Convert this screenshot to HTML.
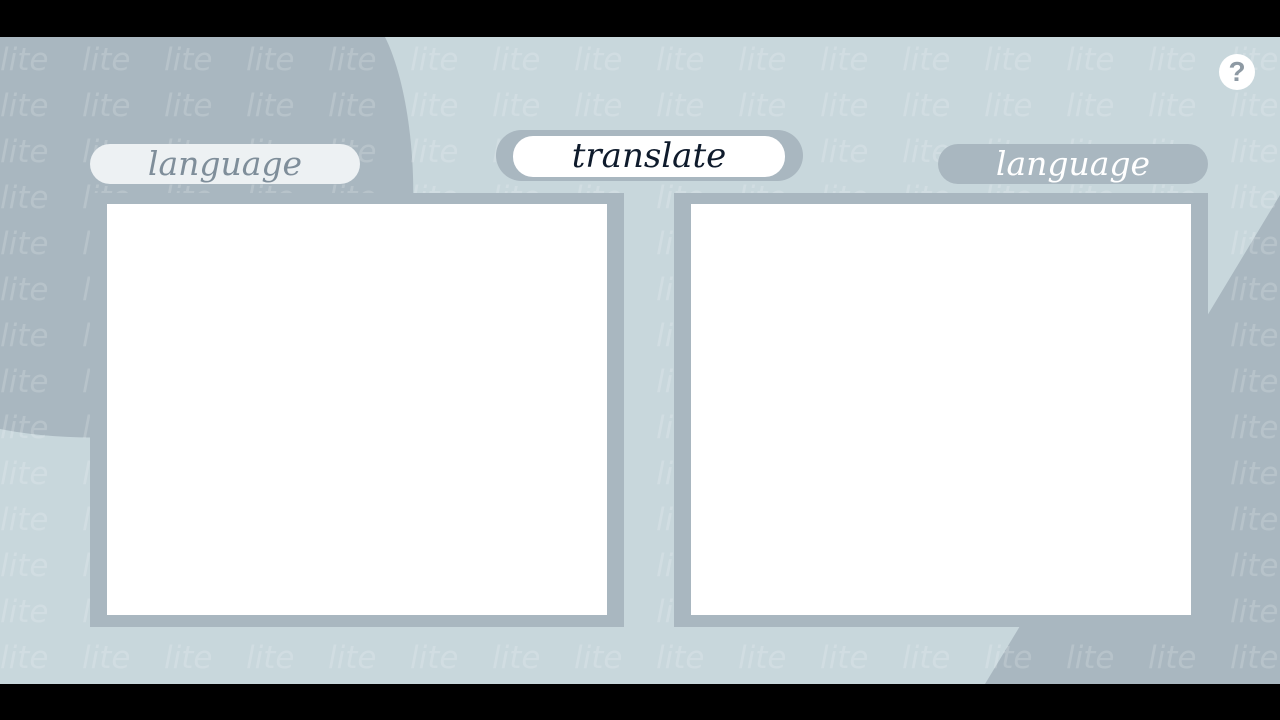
<!DOCTYPE html>
<html><head><meta charset="utf-8"><style>
html,body{margin:0;padding:0;width:1280px;height:720px;background:#000;overflow:hidden}
.stage{position:absolute;left:0;top:37px;width:1280px;height:647px;background:#c8d7dc;overflow:hidden}
.pat{position:absolute;left:0;top:0;width:1400px;font:italic 31px "DejaVu Sans","Liberation Sans",sans-serif;color:rgba(255,255,255,0.17);line-height:46px;white-space:nowrap}
.pat span{display:inline-block;width:82px}
.box{position:absolute;top:156px;width:534px;height:434px;background:#a9b7c0}
.box i{position:absolute;left:17px;top:11px;width:500px;height:411px;background:#fff}
.pill{position:absolute;border-radius:20px;text-align:center;font:italic 33px "DejaVu Serif","Liberation Serif",serif;line-height:40px}
</style></head><body>
<div class="stage">
<svg width="1280" height="647" style="position:absolute;left:0;top:0">
<path d="M0 0 L385 0 C405 40 415 110 413 170 C405 290 300 390 120 400 C70 402 30 398 0 392 Z" fill="#a9b7c0"/>
<polygon points="1280,158 985,647 1280,647" fill="#a9b7c0"/>
</svg>
<div class="pat" id="p"></div>
<div class="box" style="left:90px"><i></i></div>
<div class="box" style="left:674px"><i></i></div>
<div class="pill" style="left:90px;top:107px;width:270px;height:40px;background:#edf1f3;color:#7f8e9a">language</div>
<div class="pill" style="left:938px;top:107px;width:270px;height:40px;background:#a9b7c0;color:#fff">language</div>
<div style="position:absolute;left:496px;top:93px;width:307px;height:51px;border-radius:26px;background:#a9b7c0"></div>
<div class="pill" style="left:513px;top:99px;width:272px;height:41px;background:#fff;color:#0f1b2c;font-size:34px;line-height:40px">translate</div>
<div style="position:absolute;left:1219px;top:17px;width:36px;height:36px;border-radius:50%;background:#fff;color:#8e9aa4;font:bold 28px 'Liberation Sans',sans-serif;text-align:center;line-height:36px">?</div>
</div>
<script>
var h='';for(var r=0;r<15;r++){h+='<div>';for(var c=0;c<16;c++)h+='<span>lite</span>';h+='</div>';}
document.getElementById('p').innerHTML=h;
</script>
</body></html>
